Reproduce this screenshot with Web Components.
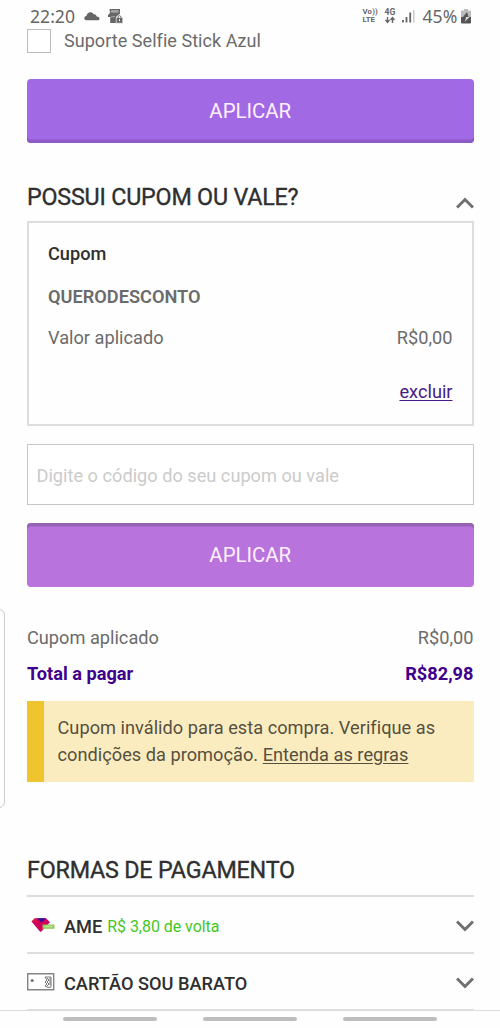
<!DOCTYPE html>
<html lang="pt-BR">
<head>
<meta charset="utf-8">
<title>Pagamento</title>
<style>
body{margin:0;background:#fefefe;font-family:Roboto,"Liberation Sans",sans-serif;font-size:18.2px;color:#6b6b6b}
</style>
</head>
<body>
<checkout-page></checkout-page>
<script>
const define=(name,html)=>{
  const t=document.createElement('template');t.innerHTML=html;
  customElements.define(name,class extends HTMLElement{
    constructor(){super();this.attachShadow({mode:'open'}).append(t.content.cloneNode(true));}
  });
};
define('status-bar',`<style>
:host{display:flex;height:28px;box-sizing:border-box;padding:4px 29.5px 0 30px;font:17.6px/24px "Noto Sans",sans-serif;color:#666;align-items:center}
.right{margin-left:auto;display:flex;align-items:center}
svg{display:block}.pct{font-size:17.6px;letter-spacing:.1px;margin:0 3px 0 7px}
.net{font:bold 7.8px/8.5px Roboto,sans-serif;width:15px;white-space:nowrap}
.net span{display:block;height:8.5px}.net span:first-child{letter-spacing:.2px}
.g{width:13px;margin:0 5px 0 7px}.net.g span{font-size:8.6px}.g svg{margin:0}
</style>
<span>22:20</span>
<svg style="margin-left:9px" width="16" height="10" viewBox="0 0 16 10"><path d="M3 9.3C-.6 9.2-.4 5.3 2.5 5.1 3 1 8 .1 9.4 3.3c1.7-.6 3.1.4 3.2 2.2 3.5-.1 4 3.8.8 3.8z" fill="#666"/></svg>
<svg style="margin-left:8px" width="15" height="15" viewBox="0 0 15 15"><path d="M1.5 0h10.5v4.8l-2 1.5L8 8v6H2.2V8H0V6l2-2z" fill="#666"/><path d="M3 1.2h7.6v2.4H3z" fill="#aaa"/><path d="M2.4 8.2 7 7.4" stroke="#aaa"/><path d="M8.2 8.5h6.5v5.7H8.2z" fill="#666" stroke="#fefefe" stroke-width=".5"/><path d="M10 8.7V7.6q1.5-2 3 0v1.1" fill="none" stroke="#666"/><path d="M11.5 10.2v2" stroke="#fff"/></svg>
<div class="right">
<div class="net"><span>Vo))</span><span>LTE</span></div>
<div class="net g"><span>4G</span><svg width="12" height="8" viewBox="0 0 12 8"><path d="M3.5 1v5M1.5 4l2 2.5 2-2.5M8.5 7V2M6.5 4l2-2.5 2 2.5" fill="none" stroke="#666" stroke-width="1.4"/></svg></div>
<svg width="13" height="14" viewBox="0 0 13 14"><path d="M1 11v2.5M4.5 8v5.5M8.2 3.5v10" stroke="#666" stroke-width="1.8"/><path d="M11.8 1v12.5" stroke="#ccc" stroke-width="1.5"/></svg>
<span class="pct">45%</span>
<svg width="10" height="15" viewBox="0 0 10 15"><path d="M3 0h4v1.5h2.3q.7 0 .7.7V8H0V2.2q0-.7.7-.7H3z" fill="#bbb"/><path d="M0 8h10v5.5q0 1-1 1H1q-1 0-1-1z" fill="#555"/><path d="M6 3 2 8h2.5v1.5H8" fill="#555"/><path d="M5 8h3.5l-4.7 4.8 1-3.2" fill="#ddd"/></svg>
</div>`);
define('check-option',`<style>
:host{display:flex;height:25px;align-items:center;font-size:18px;letter-spacing:.05px}
i{width:22px;height:22px;border:1px solid #bbb;margin:1px 13px 0 0;background:#fff}
span{line-height:25px}
</style><i></i><span><slot></slot></span>`);
define('action-button',`<style>
:host{display:flex;height:64px;box-sizing:border-box;align-items:center;justify-content:center;border-radius:4px;background:#a269e4;color:#fff0ff;font-size:20.4px;box-shadow:inset 0 -3.5px #8c5bc5}
:host([pressed]){background:#b874dc;box-shadow:inset 0 3.5px #9662b4}
</style><slot></slot>`);
define('section-title',`<style>
:host{display:flex;height:32px;align-items:center;justify-content:space-between;color:#2f2f2f}
h2{font-size:23.3px;font-weight:450;letter-spacing:-.2px;-webkit-text-stroke:.35px #2f2f2f;line-height:32px;margin:0;white-space:nowrap}
</style><h2><slot></slot></h2><slot name="icon"></slot>`);
define('chevron-icon',`<style>
:host{display:block;width:18px;height:12px}:host([up]) svg{transform:scaleY(-1)}svg{display:block}
</style><svg width="18" height="12" viewBox="0 0 18 12"><path d="m1 1.5 8 8 8-8" fill="none" stroke="#707070" stroke-width="3"/></svg>`);
define('value-row',`<style>
:host{display:flex;justify-content:space-between;height:28px;line-height:28px}
:host([total]){color:#40008c;font-weight:700}
</style><slot></slot><slot name="value"></slot>`);
define('coupon-card',`<style>
:host{display:block;height:205px;box-sizing:border-box;border:2px solid #ddd;padding:17px 19px 0}
div{line-height:28px}.t{font-weight:500;color:#2f2f2f}.c{font-weight:600;margin:15px 0 13px}
.x{text-align:right;margin-top:26px}a{color:#461b88;text-decoration:underline;text-underline-offset:2px}
</style><div class="t">Cupom</div><div class="c"><slot></slot></div>
<value-row>Valor aplicado<span slot="value">R$0,00</span></value-row><div class="x"><a>excluir</a></div>`);
define('code-field',`<style>
:host{display:flex;height:61px;box-sizing:border-box;border:1px solid #c6c6c6;padding:1px 8.5px 0;align-items:center;color:#cbcbcb;background:#fff}
</style><slot></slot>`);
define('notice-box',`<style>
:host{display:block;height:81px;box-sizing:border-box;border-left:17px solid #eec42f;background:#faecbf;color:#56503f;padding:13px 0 0 13.5px;line-height:27.3px;letter-spacing:.02px}
u{text-underline-offset:2px}
</style>Cupom inválido para esta compra. Verifique as<br>condições da promoção. <u>Entenda as regras</u>`);
define('payment-option',`<style>
:host{display:flex;align-items:center;height:57px;box-sizing:border-box;border-top:2px solid #ddd;padding-top:3px;color:#2f2f2f}
.i{width:28px;margin-right:9px}.n{font-weight:500}chevron-icon{margin-left:auto}
::slotted(small){font-size:16px;color:#45c71d;margin-left:5px}
::slotted(svg){display:block;margin-top:-2px}
</style><span class="i"><slot name="icon"></slot></span><span class="n"><slot></slot></span><slot name="extra"></slot><chevron-icon></chevron-icon>`);
define('nav-bar',`<style>
:host{display:flex;position:absolute;left:0;right:0;bottom:0;height:18px;box-sizing:border-box;border-top:1px solid #ddd;background:#fefefe;padding:6px 63px 0;justify-content:space-between}
i{width:94px;height:4px;border-radius:2px;background:#bdbdbd}
</style><i></i><i></i><i></i>`);
define('edge-handle',`<style>
:host{position:absolute;left:-9px;top:609px;width:12px;height:197px;border:1px solid #ccc;border-radius:6px}
</style>`);
define('checkout-page',`<style>
:host{display:block;position:relative;height:1028px;overflow:hidden}
main{padding:0 26.5px 0 27px}
small{letter-spacing:-.05px}
</style>
<status-bar></status-bar>
<main>
<check-option>Suporte Selfie Stick Azul</check-option>
<action-button style="margin-top:26px">APLICAR</action-button>
<section-title style="margin-top:38px">POSSUI CUPOM OU VALE?<chevron-icon slot="icon" up style="margin-top:12px"></chevron-icon></section-title>
<coupon-card style="margin-top:8px">QUERODESCONTO</coupon-card>
<code-field style="margin-top:18px">Digite o código do seu cupom ou vale</code-field>
<action-button pressed style="margin-top:18px">APLICAR</action-button>
<value-row style="margin-top:37px">Cupom aplicado<span slot="value">R$0,00</span></value-row>
<value-row total style="margin-top:8px">Total a pagar<span slot="value">R$82,98</span></value-row>
<notice-box style="margin-top:13px"></notice-box>
<section-title style="margin-top:72px">FORMAS DE PAGAMENTO</section-title>
<payment-option style="margin-top:9px">
<svg slot="icon" width="28" height="16" viewBox="0 0 28 16"><path d="M4.5 4.5 8 1.3h11l4 4-8.7 9.2q-.7.5-1.4 0z" fill="#d0005c"/><path d="M10 1.3h9l-4.5 4.2z" fill="#2d109b"/><path d="M4.5 4.5 8 1.3l3.5 4z" fill="#dc1648"/><path d="M15.5 7.5h12v4.3h-12z" fill="#8ccc5c"/><path d="M17.5 9.5h8" stroke="#c4e69b" stroke-width="1.5"/></svg>
AME<small slot="extra">R$ 3,80 de volta</small></payment-option>
<payment-option>
<svg slot="icon" width="28" height="18" viewBox="0 0 28 18"><path d="M.7.7h26v16H.7z" fill="#fff" stroke="#858585" stroke-width="1.4"/><circle cx="5.2" cy="7.5" r="1.6" fill="#777"/><path d="M18 4h6v10q-3 1.5-6-1l2-2-2-2 2-2z" fill="none" stroke="#777"/><path d="m20 5 2 2-2 2 2 2-2 2m3-8v7" fill="none" stroke="#777"/></svg>
CARTÃO SOU BARATO</payment-option>
<payment-option></payment-option>
</main>
<edge-handle></edge-handle><nav-bar></nav-bar>`);
</script>
</body>
</html>
